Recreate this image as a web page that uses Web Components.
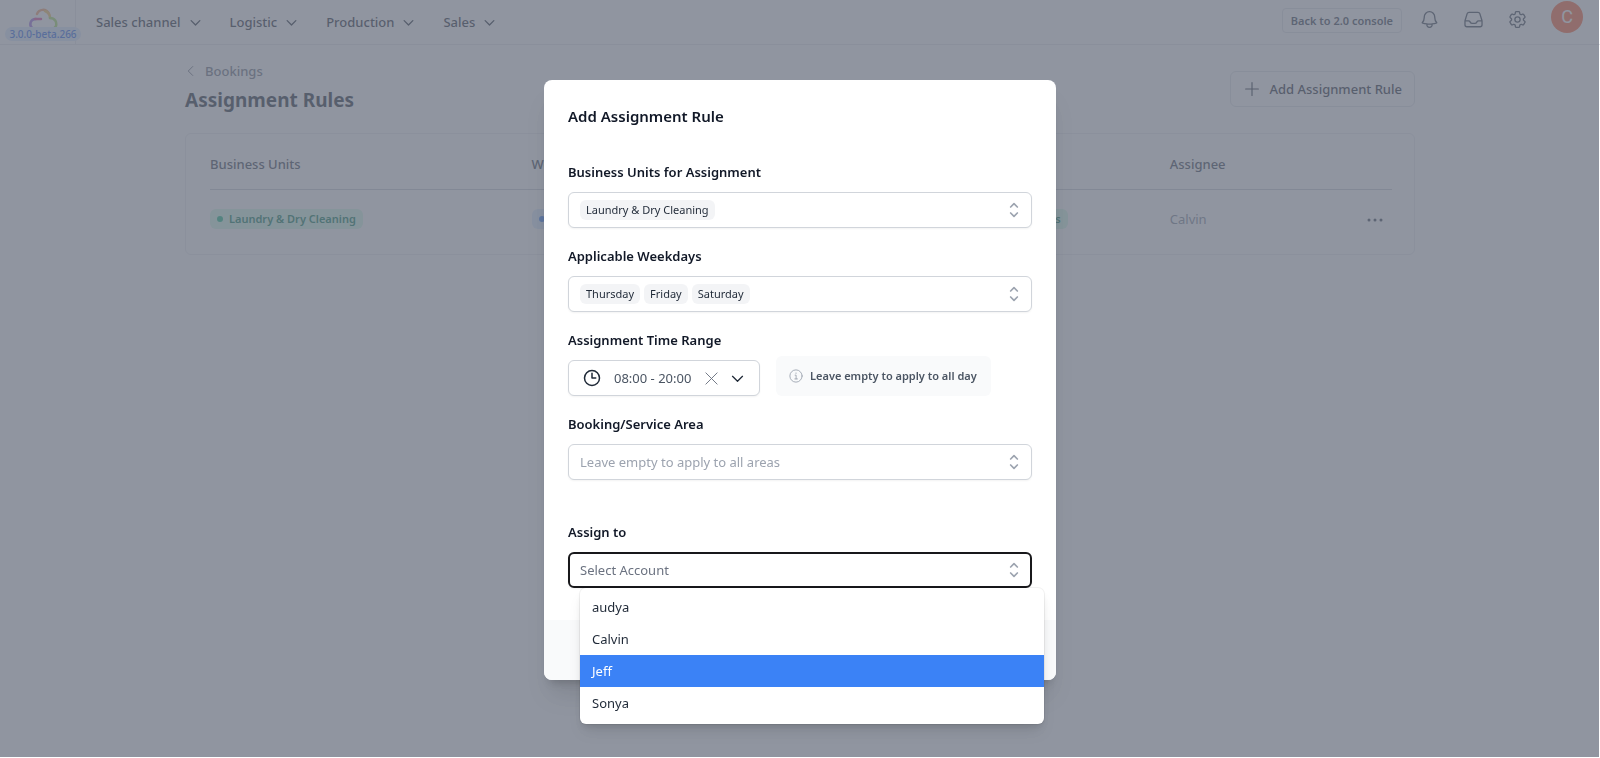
<!DOCTYPE html>
<html lang="en">
<head>
<meta charset="UTF-8">
<meta name="viewport" content="width=device-width, initial-scale=1.0">
<title>Assignment Rules</title>
<style>
  body { margin: 0; min-height: 100vh; background: #fff; color: #1f2937; font-family: "Noto Sans", "Open Sans", sans-serif; font-size: 13px; line-height: 20px; }
</style>
</head>
<body>

<top-bar version="3.0.0-beta.266">
  <nav-menu>Sales channel</nav-menu>
  <nav-menu>Logistic</nav-menu>
  <nav-menu>Production</nav-menu>
  <nav-menu>Sales</nav-menu>
</top-bar>

<rules-page></rules-page>

<modal-dialog heading="Add Assignment Rule">
  <select-field label="Business Units for Assignment">
    <value-chip>Laundry &amp; Dry Cleaning</value-chip>
  </select-field>
  <select-field label="Applicable Weekdays">
    <value-chip>Thursday</value-chip>
    <value-chip>Friday</value-chip>
    <value-chip>Saturday</value-chip>
  </select-field>
  <time-field label="Assignment Time Range" value="08:00 - 20:00">Leave empty to apply to all day</time-field>
  <search-field label="Booking/Service Area" placeholder="Leave empty to apply to all areas"></search-field>
  <search-field class="assignee" label="Assign to" placeholder="Select Account" open>
    <list-option>audya</list-option>
    <list-option>Calvin</list-option>
    <list-option active>Jeff</list-option>
    <list-option>Sonya</list-option>
  </search-field>
</modal-dialog>

<script>
const ICONS = {
  down: '<path d="m4 8.500 8 8 8-8"/>',
  left: '<path d="m15.500 3-9 9 9 9"/>',
  plus: '<path d="M12 3.500v17M3.500 12h17"/>',
  close: '<path d="m3 3 18 18M21 3 3 21"/>',
  clock: '<circle cx="12" cy="12" r="10"/><path d="M12 5.500V12h5"/>',
  info: '<circle cx="12" cy="12" r="10.500"/><path d="M10.500 10.500H12.200V17M10 17h4.500M12 6.800v.8"/>',
  selector: '<path d="m8 8.400 4-4 4 4m0 7.200-4 4-4-4"/>',
  dots: '<g fill="currentColor" stroke="none"><circle cx="4" cy="12" r="2"/><circle cx="12" cy="12" r="2"/><circle cx="20" cy="12" r="2"/></g>',
  bell: '<path d="M14.857 17.082a23.848 23.848 0 0 0 5.454-1.310A8.967 8.967 0 0 1 18 9.750V9A6 6 0 0 0 6 9v.75a8.967 8.967 0 0 1-2.312 6.022c1.733.64 3.560 1.085 5.455 1.310m5.714 0a24.255 24.255 0 0 1-5.714 0m5.714 0a3 3 0 1 1-5.714 0"/>',
  inbox: '<path d="M2.250 13.500h3.860a2.250 2.250 0 0 1 2.012 1.244l.256.512a2.250 2.250 0 0 0 2.013 1.244h3.218a2.250 2.250 0 0 0 2.013-1.244l.256-.512a2.250 2.250 0 0 1 2.013-1.244h3.859m-19.500.338V18a2.250 2.250 0 0 0 2.250 2.250h15A2.250 2.250 0 0 0 21.750 18v-4.162c0-.224-.034-.447-.1-.661L19.240 5.338a2.250 2.250 0 0 0-2.150-1.588H6.911a2.250 2.250 0 0 0-2.150 1.588L2.350 13.177a2.250 2.250 0 0 0-.1.661Z"/>',
  cog: '<path d="M9.594 3.940c.09-.542.56-.94 1.110-.94h2.593c.55 0 1.020.398 1.110.94l.213 1.281c.063.374.313.686.645.87.074.04.147.083.22.127.325.196.72.257 1.075.124l1.217-.456a1.125 1.125 0 0 1 1.370.49l1.296 2.247a1.125 1.125 0 0 1-.26 1.431l-1.003.827c-.293.241-.438.613-.43.992a7.723 7.723 0 0 1 0 .255c-.008.378.137.75.43.991l1.004.827c.424.35.534.955.26 1.430l-1.298 2.247a1.125 1.125 0 0 1-1.369.491l-1.217-.456c-.355-.133-.75-.072-1.076.124a6.470 6.470 0 0 1-.22.128c-.331.183-.581.495-.644.869l-.213 1.281c-.09.543-.56.94-1.110.94h-2.594c-.55 0-1.019-.398-1.110-.94l-.213-1.281c-.062-.374-.312-.686-.644-.87a6.520 6.520 0 0 1-.22-.127c-.325-.196-.72-.257-1.076-.124l-1.217.456a1.125 1.125 0 0 1-1.369-.49l-1.297-2.247a1.125 1.125 0 0 1 .26-1.431l1.004-.827c.292-.24.437-.613.43-.991a6.932 6.932 0 0 1 0-.255c.007-.38-.138-.751-.43-.992l-1.004-.827a1.125 1.125 0 0 1-.26-1.430l1.297-2.247a1.125 1.125 0 0 1 1.370-.491l1.216.456c.356.133.751.072 1.076-.124.072-.044.146-.086.22-.128.332-.183.582-.495.644-.869l.214-1.280Z"/><circle cx="12" cy="12" r="3"/>'
};

class UiIcon extends HTMLElement {
  connectedCallback() {
    const size = this.getAttribute('size') || 20;
    const weight = this.getAttribute('weight') || 1.5;
    this.attachShadow({ mode: 'open' }).innerHTML = `
      <style>
        :host { display: inline-flex; flex: none; }
        svg { display: block; fill: none; stroke: currentColor; stroke-linecap: round; stroke-linejoin: round; }
      </style>
      <svg width="${size}" height="${size}" viewBox="0 0 24 24" stroke-width="${weight}" aria-hidden="true">${ICONS[this.getAttribute('name')]}</svg>
    `;
  }
}

class NavMenu extends HTMLElement {
  connectedCallback() {
    this.attachShadow({ mode: 'open' }).innerHTML = `
      <style>
        :host { display: block; }
        button { display: flex; align-items: center; gap: 8px; padding: 0; border: 0; background: none; color: #1f2937; font: inherit; font-weight: 500; cursor: pointer; }
      </style>
      <button type="button"><slot></slot><ui-icon name="down" size="13" weight="2.5"></ui-icon></button>
    `;
  }
}

class TopBar extends HTMLElement {
  connectedCallback() {
    this.attachShadow({ mode: 'open' }).innerHTML = `
      <style>
        :host { display: flex; align-items: stretch; height: 44px; border-bottom: 1px solid #e5e7eb; background: #fff; }
        .brand { position: relative; width: 75px; border-right: 1px solid #e5e7eb; box-sizing: content-box; }
        .brand svg { display: block; margin: 8px 0 0 28px; }
        .version { position: absolute; left: 5px; top: 27px; width: 76px; border-radius: 7px; background: #dbeafe; color: #2563eb; font-size: 10px; font-weight: 500; line-height: 14px; text-align: center; }
        nav { display: flex; align-items: center; gap: 28px; padding-left: 20px; }
        .actions { display: flex; align-items: flex-start; gap: 23px; margin-left: auto; padding-right: 17px; color: #374151; }
        button { padding: 0; border: 0; background: none; color: inherit; font: inherit; cursor: pointer; }
        .console { margin: 8px -6px 0 0; height: 25px; padding: 0 8px; border: 1px solid #dfe2e6; border-radius: 4px; font-size: 11px; font-weight: 600; }
        .icon { display: flex; margin-top: 9px; }
        .avatar { width: 32px; height: 32px; margin: 1px 0 0; border-radius: 50%; background: #ff6236; color: #fff; font-family: Roboto, sans-serif; font-size: 18px; }
      </style>
      <div class="brand">
        <svg width="31" height="22" viewBox="0 0 31 22" fill="none" stroke-width="2.5" stroke-linecap="round">
          <path d="M9 6c2-5 9-6 12 0" stroke="#f59e6b"/>
          <path d="M17 3c3 1 5 3 5 7" stroke="#f2c15c"/>
          <path d="M22 10c5 0 7 4 6 8-1 2-3 3-5 3" stroke="#a3e063"/>
          <path d="M8 11c-6 0-7 6-4 9" stroke="#9b6be0"/>
          <path d="M13 11H7" stroke="#e0489a"/>
        </svg>
        <span class="version">${this.getAttribute('version')}</span>
      </div>
      <nav><slot></slot></nav>
      <div class="actions">
        <button type="button" class="console">Back to 2.0 console</button>
        <button type="button" class="icon" aria-label="Notifications"><ui-icon name="bell" size="21"></ui-icon></button>
        <button type="button" class="icon" aria-label="Inbox"><ui-icon name="inbox" size="21"></ui-icon></button>
        <button type="button" class="icon" aria-label="Settings"><ui-icon name="cog" size="21"></ui-icon></button>
        <button type="button" class="avatar">C</button>
      </div>
    `;
  }
}

class StatusTag extends HTMLElement {
  connectedCallback() {
    this.attachShadow({ mode: 'open' }).innerHTML = `
      <style>
        :host { display: inline-flex; align-items: center; gap: 6px; height: 20px; padding: 0 7px; border-radius: 6px; background: #d1fae5; color: #047857; font-size: 11px; font-weight: 600; white-space: nowrap; }
        :host([tone="blue"]) { background: #dbeafe; color: #1d4ed8; }
        i { width: 6px; height: 6px; border-radius: 50%; background: #10b981; }
        :host([tone="blue"]) i { background: #3b82f6; }
      </style>
      <i></i><slot></slot>
    `;
  }
}

class RulesPage extends HTMLElement {
  connectedCallback() {
    this.attachShadow({ mode: 'open' }).innerHTML = `
      <style>
        :host { display: block; max-width: 1230px; margin: 0 auto; padding: 16px 24px; }
        header { display: flex; justify-content: space-between; align-items: flex-start; margin-bottom: 20px; }
        .back { display: flex; align-items: center; gap: 8px; color: #6b7280; font-weight: 500; text-decoration: none; }
        h1 { margin: 6px 0 0; color: #1f2937; font-size: 19px; font-weight: 700; line-height: 26px; }
        .add { display: flex; align-items: center; gap: 8px; height: 36px; margin-top: 10px; padding: 0 12px; border: 1px solid #dfe2e6; border-radius: 6px; background: none; color: #1f2937; font: inherit; font-weight: 500; cursor: pointer; }
        .card { padding: 8px 22px 4px 24px; border: 1px solid #e9ebee; border-radius: 6px; }
        table { width: 100%; border-collapse: collapse; table-layout: fixed; text-align: left; }
        th, td { padding: 0 0 3px; }
        th { height: 44px; border-bottom: 1px solid #c5cad2; color: #374151; font-weight: 500; }
        td { height: 57px; color: #7d8695; vertical-align: middle; }
        td:last-child { text-align: right; }
        td status-tag, .more { vertical-align: middle; }
        .more { display: inline-flex; padding: 0 8px 0 0; border: 0; background: none; color: #374151; cursor: pointer; }
      </style>
      <header>
        <div>
          <a class="back" href="#bookings"><ui-icon name="left" size="12" weight="2"></ui-icon>Bookings</a>
          <h1>Assignment Rules</h1>
        </div>
        <button type="button" class="add"><ui-icon name="plus" size="18"></ui-icon>Add Assignment Rule</button>
      </header>
      <div class="card">
        <table>
          <colgroup><col style="width: 27.2%"><col style="width: 39.3%"><col style="width: 14.7%"><col><col style="width: 5%"></colgroup>
          <thead>
            <tr><th>Business Units</th><th>Week</th><th>Areas</th><th>Assignee</th><th></th></tr>
          </thead>
          <tbody>
            <tr>
              <td><status-tag>Laundry &amp; Dry Cleaning</status-tag></td>
              <td><status-tag tone="blue">Thu</status-tag></td>
              <td><status-tag>All areas</status-tag></td>
              <td>Calvin</td>
              <td><button type="button" class="more" aria-label="More"><ui-icon name="dots" size="18"></ui-icon></button></td>
            </tr>
          </tbody>
        </table>
      </div>
    `;
  }
}

class ModalDialog extends HTMLElement {
  connectedCallback() {
    this.attachShadow({ mode: 'open' }).innerHTML = `
      <style>
        :host { position: fixed; inset: 0 1px 1px 0; display: flex; justify-content: center; align-items: flex-start; padding: 80px 0 0 1px; box-sizing: border-box; background: rgba(107, 114, 128, 0.75); }
        section { width: 100%; max-width: 512px; border-radius: 8px; background: #fff; box-shadow: 0 20px 25px -5px rgba(0, 0, 0, 0.1), 0 8px 10px -6px rgba(0, 0, 0, 0.2); }
        h2 { margin: 0; padding: 24px 24px 33px; color: #111827; font-size: 15px; font-weight: 600; line-height: 24px; }
        form { display: flex; flex-direction: column; gap: 17px; padding: 0 24px 32px; }
        ::slotted(.assignee) { margin-top: 24px; }
        footer { height: 60px; border-radius: 0 0 8px 8px; background: #f9fafb; }
      </style>
      <section role="dialog" aria-labelledby="heading">
        <h2 id="heading">${this.getAttribute('heading')}</h2>
        <form><slot></slot></form>
        <footer></footer>
      </section>
    `;
  }
}

class ValueChip extends HTMLElement {
  connectedCallback() {
    this.attachShadow({ mode: 'open' }).innerHTML = `
      <style>
        :host { display: inline-block; padding: 0 6px; border-radius: 6px; background: #f3f4f6; color: #1f2937; font-size: 11px; line-height: 20px; }
      </style>
      <slot></slot>
    `;
  }
}

// label and box rules shared by the three kinds of field
const FIELD_STYLES = `
  :host { display: block; }
  label { display: block; margin-bottom: 9px; color: #111827; font-weight: 600; line-height: 22px; }
  .box { display: flex; align-items: center; box-sizing: border-box; width: 100%; height: 36px; border: 1px solid #d1d5db; border-radius: 6px; background: #fff; box-shadow: 0 1px 2px rgba(0, 0, 0, 0.05); font: inherit; }
  .selector { color: #9ca3af; }
`;

class SelectField extends HTMLElement {
  connectedCallback() {
    this.attachShadow({ mode: 'open' }).innerHTML = `
      <style>
        ${FIELD_STYLES}
        .box { gap: 4px; padding: 0 7px 0 11px; text-align: left; cursor: pointer; }
        .selector { margin-left: auto; }
      </style>
      <label for="control">${this.getAttribute('label')}</label>
      <button type="button" id="control" class="box" aria-haspopup="listbox">
        <slot></slot>
        <ui-icon class="selector" name="selector" weight="2"></ui-icon>
      </button>
    `;
  }
}

class SearchField extends HTMLElement {
  connectedCallback() {
    this.attachShadow({ mode: 'open' }).innerHTML = `
      <style>
        ${FIELD_STYLES}
        .wrap { position: relative; }
        .box { padding: 0 7px 0 11px; }
        input { flex: 1; min-width: 0; padding: 0; border: 0; outline: 0; background: none; color: #111827; font: inherit; }
        input::placeholder { color: #9ca3af; opacity: 1; }
        .menu { display: none; position: absolute; top: 100%; left: 12px; width: 100%; padding: 3px 0 5px; border-radius: 6px; background: #fff; box-shadow: 0 0 0 1px rgba(0, 0, 0, 0.05), 0 10px 15px -3px rgba(0, 0, 0, 0.1), 0 4px 6px -2px rgba(0, 0, 0, 0.1); }
        :host([open]) .box { padding: 0 6px 0 10px; border: 2px solid #18181b; }
        :host([open]) input::placeholder { color: #6b7280; }
        :host([open]) .menu { display: block; }
      </style>
      <label for="control">${this.getAttribute('label')}</label>
      <div class="wrap">
        <div class="box">
          <input type="text" id="control" role="combobox" autocomplete="off" aria-expanded="${this.hasAttribute('open')}" placeholder="${this.getAttribute('placeholder')}">
          <ui-icon class="selector" name="selector" weight="2"></ui-icon>
        </div>
        <div class="menu" role="listbox"><slot></slot></div>
      </div>
    `;
    this.shadowRoot.querySelector('.selector').addEventListener('click', () => this.toggleAttribute('open'));
  }
}

class ListOption extends HTMLElement {
  connectedCallback() {
    this.setAttribute('role', 'option');
    this.attachShadow({ mode: 'open' }).innerHTML = `
      <style>
        :host { display: block; padding: 6px 12px; color: #1f2937; line-height: 20px; cursor: pointer; }
        :host([active]) { background: #3b82f6; color: #fff; }
      </style>
      <slot></slot>
    `;
    this.addEventListener('mouseenter', () => {
      for (const option of this.parentElement.children) option.toggleAttribute('active', option === this);
    });
  }
}

class TimeField extends HTMLElement {
  connectedCallback() {
    this.attachShadow({ mode: 'open' }).innerHTML = `
      <style>
        ${FIELD_STYLES}
        .row { display: flex; align-items: flex-end; gap: 16px; height: 36px; }
        .box { width: 192px; padding: 0 14px; color: #1f2937; }
        input { flex: 1; width: 80px; min-width: 0; margin-left: 13px; padding: 0; border: 0; outline: 0; background: none; color: #4b5563; font: inherit; }
        button { display: flex; padding: 0; border: 0; background: none; color: #6b7280; cursor: pointer; }
        .toggle { margin-left: 11px; color: #1f2937; }
        .hint { display: flex; align-items: center; gap: 7px; height: 40px; padding: 0 14px 0 13px; border-radius: 6px; background: #f9fafb; color: #4b5563; font-size: 11px; font-weight: 600; }
        .hint ui-icon { color: #9ca3af; }
      </style>
      <label for="control">${this.getAttribute('label')}</label>
      <div class="row">
        <div class="box">
          <ui-icon name="clock" size="18" weight="2"></ui-icon>
          <input type="text" id="control" value="${this.getAttribute('value')}">
          <button type="button" aria-label="Clear"><ui-icon name="close" size="15" weight="1.5"></ui-icon></button>
          <button type="button" class="toggle" aria-label="Open"><ui-icon name="down" size="15" weight="2"></ui-icon></button>
        </div>
        <div class="hint"><ui-icon name="info" size="14" weight="1.5"></ui-icon><span><slot></slot></span></div>
      </div>
    `;
  }
}

customElements.define('ui-icon', UiIcon);
customElements.define('nav-menu', NavMenu);
customElements.define('top-bar', TopBar);
customElements.define('status-tag', StatusTag);
customElements.define('rules-page', RulesPage);
customElements.define('value-chip', ValueChip);
customElements.define('list-option', ListOption);
customElements.define('select-field', SelectField);
customElements.define('search-field', SearchField);
customElements.define('time-field', TimeField);
customElements.define('modal-dialog', ModalDialog);
</script>
</body>
</html>
